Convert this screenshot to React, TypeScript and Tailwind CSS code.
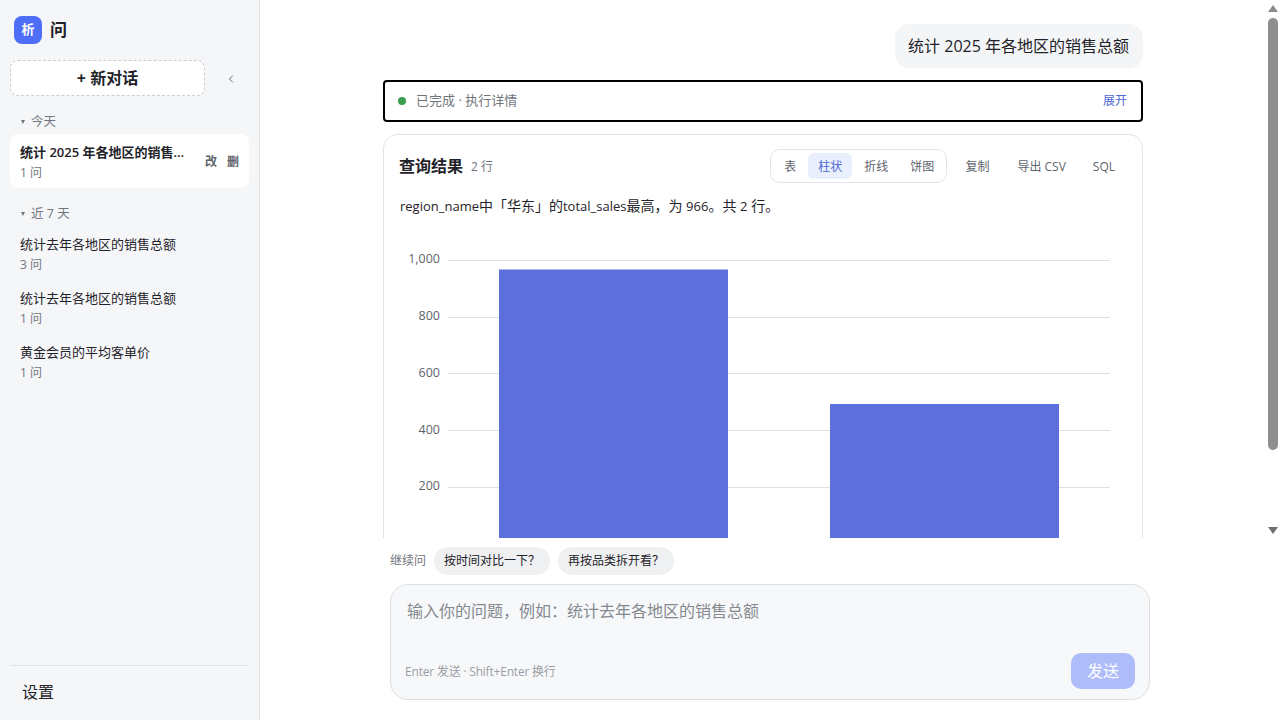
import { ChevronLeft } from 'lucide-react';

const font = "font-['Open_Sans','Noto_Sans_CJK_SC',sans-serif]";

const weekChats = [
  { title: '统计去年各地区的销售总额', count: '3 问' },
  { title: '统计去年各地区的销售总额', count: '1 问' },
  { title: '黄金会员的平均客单价', count: '1 问' },
];

const chartTypes = ['表', '柱状', '折线', '饼图'];
const ticks = [
  { label: '1,000', y: 26, ty: 29 },
  { label: '800', y: 83, ty: 86 },
  { label: '600', y: 139, ty: 143 },
  { label: '400', y: 196, ty: 200 },
  { label: '200', y: 253, ty: 256 },
  { label: '0', y: 310, ty: 313 },
];

const GroupLabel = ({ text, className }: { text: string; className: string }) => (
  <div className={`flex items-center gap-[6px] pl-[11px] text-[12.5px] leading-[18px] text-[#70757d] ${className}`}>
    <span className="w-0 h-0 border-x-[2.5px] border-x-transparent border-t-[4px] border-t-[#70757d]" />
    {text}
  </div>
);

const Sidebar = () => (
  <aside className="w-[260px] h-full shrink-0 flex flex-col bg-[#f5f6f8] border-r border-[#e4e6ea] px-[10px]">
    <div className="flex items-center gap-2 h-[28px] mt-4 pl-1">
      <div className="w-[28px] h-[28px] rounded-lg bg-[#4f6ef7] text-white text-[13px] font-bold flex items-center justify-center">
        析
      </div>
      <span className="text-[17px] font-bold text-[#1f2329]">问</span>
    </div>

    <div className="flex items-center mt-4">
      <button className="w-[195px] h-[36px] rounded-lg border border-dashed border-[#c9ccd2] bg-white text-[16px] font-bold text-[#1f2329]">
        + 新对话
      </button>
      <ChevronLeft className="w-3 h-3 ml-5 mt-[2px] text-[#666b73]" strokeWidth={2} />
    </div>

    <GroupLabel text="今天" className="mt-[17px]" />
    <div className="mt-[3px] h-[54px] rounded-lg bg-white pl-[10px] pr-[10px] flex items-center">
      <div className="min-w-0 flex-1 pt-[2px]">
        <div className="truncate text-[13px] leading-[18px] font-semibold text-[#1f2329]">统计 2025 年各地区的销售总额</div>
        <div className="text-[12px] leading-[16px] mt-[4px] text-[#70757d]">1 问</div>
      </div>
      <div className="flex gap-[10px] ml-5 pt-[2px] text-[12px] font-semibold text-[#5f646c]">
        <span>改</span>
        <span>删</span>
      </div>
    </div>

    <GroupLabel text="近 7 天" className="mt-[17px]" />
    <div className="mt-[4px] flex flex-col">
      {weekChats.map((chat, i) => (
        <div key={i} className="h-[54px] pl-[10px] flex flex-col justify-center">
          <div className="text-[13px] leading-[18px] text-[#1f2329]">{chat.title}</div>
          <div className="text-[12px] leading-[16px] mt-[4px] text-[#70757d]">{chat.count}</div>
        </div>
      ))}
    </div>

    <div className="mt-auto border-t border-[#e1e3e7] h-[55px] pl-3 pb-[2px] flex items-center text-[16px] text-[#1f2329]">
      设置
    </div>
  </aside>
);

const BarChart = () => (
  <svg width="726" height="360" className="mt-[18px] block">
    {ticks.map(t => (
      <g key={t.label}>
        <line x1="48" x2="710" y1={t.y + 0.5} y2={t.y + 0.5} stroke="#dcdfe3" />
        <text x="40" y={t.ty} textAnchor="end" fontSize="12.5" fill="#5f646c">
          {t.label}
        </text>
      </g>
    ))}
    <rect x="99" y="35.5" width="229" height="274.5" fill="#5d6fdc" />
    <rect x="430" y="170" width="229" height="140" fill="#5d6fdc" />
    <text x="213" y="332" textAnchor="middle" fontSize="12.5" fill="#5f646c">华东</text>
    <text x="544" y="332" textAnchor="middle" fontSize="12.5" fill="#5f646c">华北</text>
  </svg>
);

const ResultCard = () => (
  <section className="mt-3 rounded-[14px] border border-[#e2e4e8] bg-white px-4 pt-[14px] pb-4">
    <div className="flex items-center h-[34px]">
      <h2 className="-ml-px text-[16px] font-bold text-[#1f2329]">查询结果</h2>
      <span className="ml-2 pt-[2px] text-[12px] text-[#70757d]">2 行</span>
      <div className="ml-auto h-[34px] rounded-[10px] border border-[#e2e4e8] flex items-center pl-[3px] pr-[2px] gap-[2px] text-[12px] text-[#5f646c]">
        {chartTypes.map(c => (
          <span
            key={c}
            className={
              c === '柱状'
                ? 'h-[26px] px-[10px] pt-px rounded-md flex items-center bg-[#e9effd] text-[#4f6ad8]'
                : 'h-[26px] px-[10px] pt-px rounded-md flex items-center'
            }
          >
            {c}
          </span>
        ))}
      </div>
      <div className="flex items-center pt-px text-[12px] text-[#5f646c] ml-[18px] mr-[11px]">
        <span>复制</span>
        <span className="ml-[28px]">导出 CSV</span>
        <span className="ml-[27px]">SQL</span>
      </div>
    </div>
    <p className="mt-[13px] text-[14px] leading-[20px] text-[#1f2329]">
      <span className="text-[13px]">region_name</span>中「华东」的<span className="text-[13px]">total_sales</span>最高，为 <span className="text-[13px]">966</span>。共 <span className="text-[13px]">2</span> 行。
    </p>
    <BarChart />
  </section>
);

const Scrollbar = () => (
  <div className="absolute right-0 top-0 bottom-0 w-[14px] pr-px bg-white flex flex-col items-center">
    <div className="mt-[5px] w-0 h-0 border-x-[5px] border-x-transparent border-b-[7px] border-b-[#8a8a8a]" />
    <div className="mt-[6px] w-[10px] h-[432px] rounded-[5px] bg-[#8f8f8f]" />
    <div className="mt-auto mb-[4px] w-0 h-0 border-x-[5px] border-x-transparent border-t-[7px] border-t-[#6f6f6f]" />
  </div>
);

export default function App() {
  return (
    <div className={`w-[1280px] h-[720px] overflow-hidden flex bg-white ${font}`}>
      <Sidebar />
      <main className="flex-1 min-w-0 flex flex-col">
        <div className="relative h-[538px] shrink-0 overflow-hidden pr-[14px]">
          <div className="w-[760px] mx-auto pt-6">
            <div className="flex justify-end">
              <div className="h-[44px] pl-[13px] pr-[14px] rounded-[14px] bg-[#f4f5f7] flex items-center text-[16px] text-[#1f2329]">
                统计 2025 年各地区的销售总额
              </div>
            </div>
            <div className="mt-3 h-[42px] rounded-[4px] border-2 border-black flex items-center pl-[13px] pr-[14px]">
              <span className="w-2 h-2 rounded-full bg-[#3a9d4f]" />
              <span className="ml-[10px] text-[13px] text-[#70757d]">已完成 · 执行详情</span>
              <span className="ml-auto text-[12px] text-[#4f6ad8]">展开</span>
            </div>
            <ResultCard />
          </div>
          <Scrollbar />
        </div>

        <div className="w-[760px] mx-auto">
          <div className="mt-2 flex items-center h-[29px] gap-2">
            <span className="text-[12px] text-[#70757d]">继续问</span>
            <span className="h-[28px] px-[10px] rounded-full bg-[#eff0f2] flex items-center text-[12px] text-[#1f2329]">按时间对比一下？</span>
            <span className="h-[28px] px-[10px] rounded-full bg-[#eff0f2] flex items-center text-[12px] text-[#1f2329]">再按品类拆开看？</span>
          </div>
          <div className="mt-[9px] h-[116px] rounded-[18px] border border-[#dcdfe3] bg-[#f7f8fa] pl-[16px] pr-[14px] pt-[15px] flex flex-col">
            <div className="text-[16px] leading-[22px] text-[#85898f]">输入你的问题，例如：统计去年各地区的销售总额</div>
            <div className="mt-auto mb-[10px] flex items-end justify-between">
              <span className="mb-[8px] -ml-[2px] text-[12px] tracking-[-0.2px] text-[#9a9ea4]">Enter 发送 · Shift+Enter 换行</span>
              <button className="w-[64px] h-[36px] rounded-[10px] bg-[#aebcf9] text-white text-[16px]">发送</button>
            </div>
          </div>
        </div>
      </main>
    </div>
  );
}
